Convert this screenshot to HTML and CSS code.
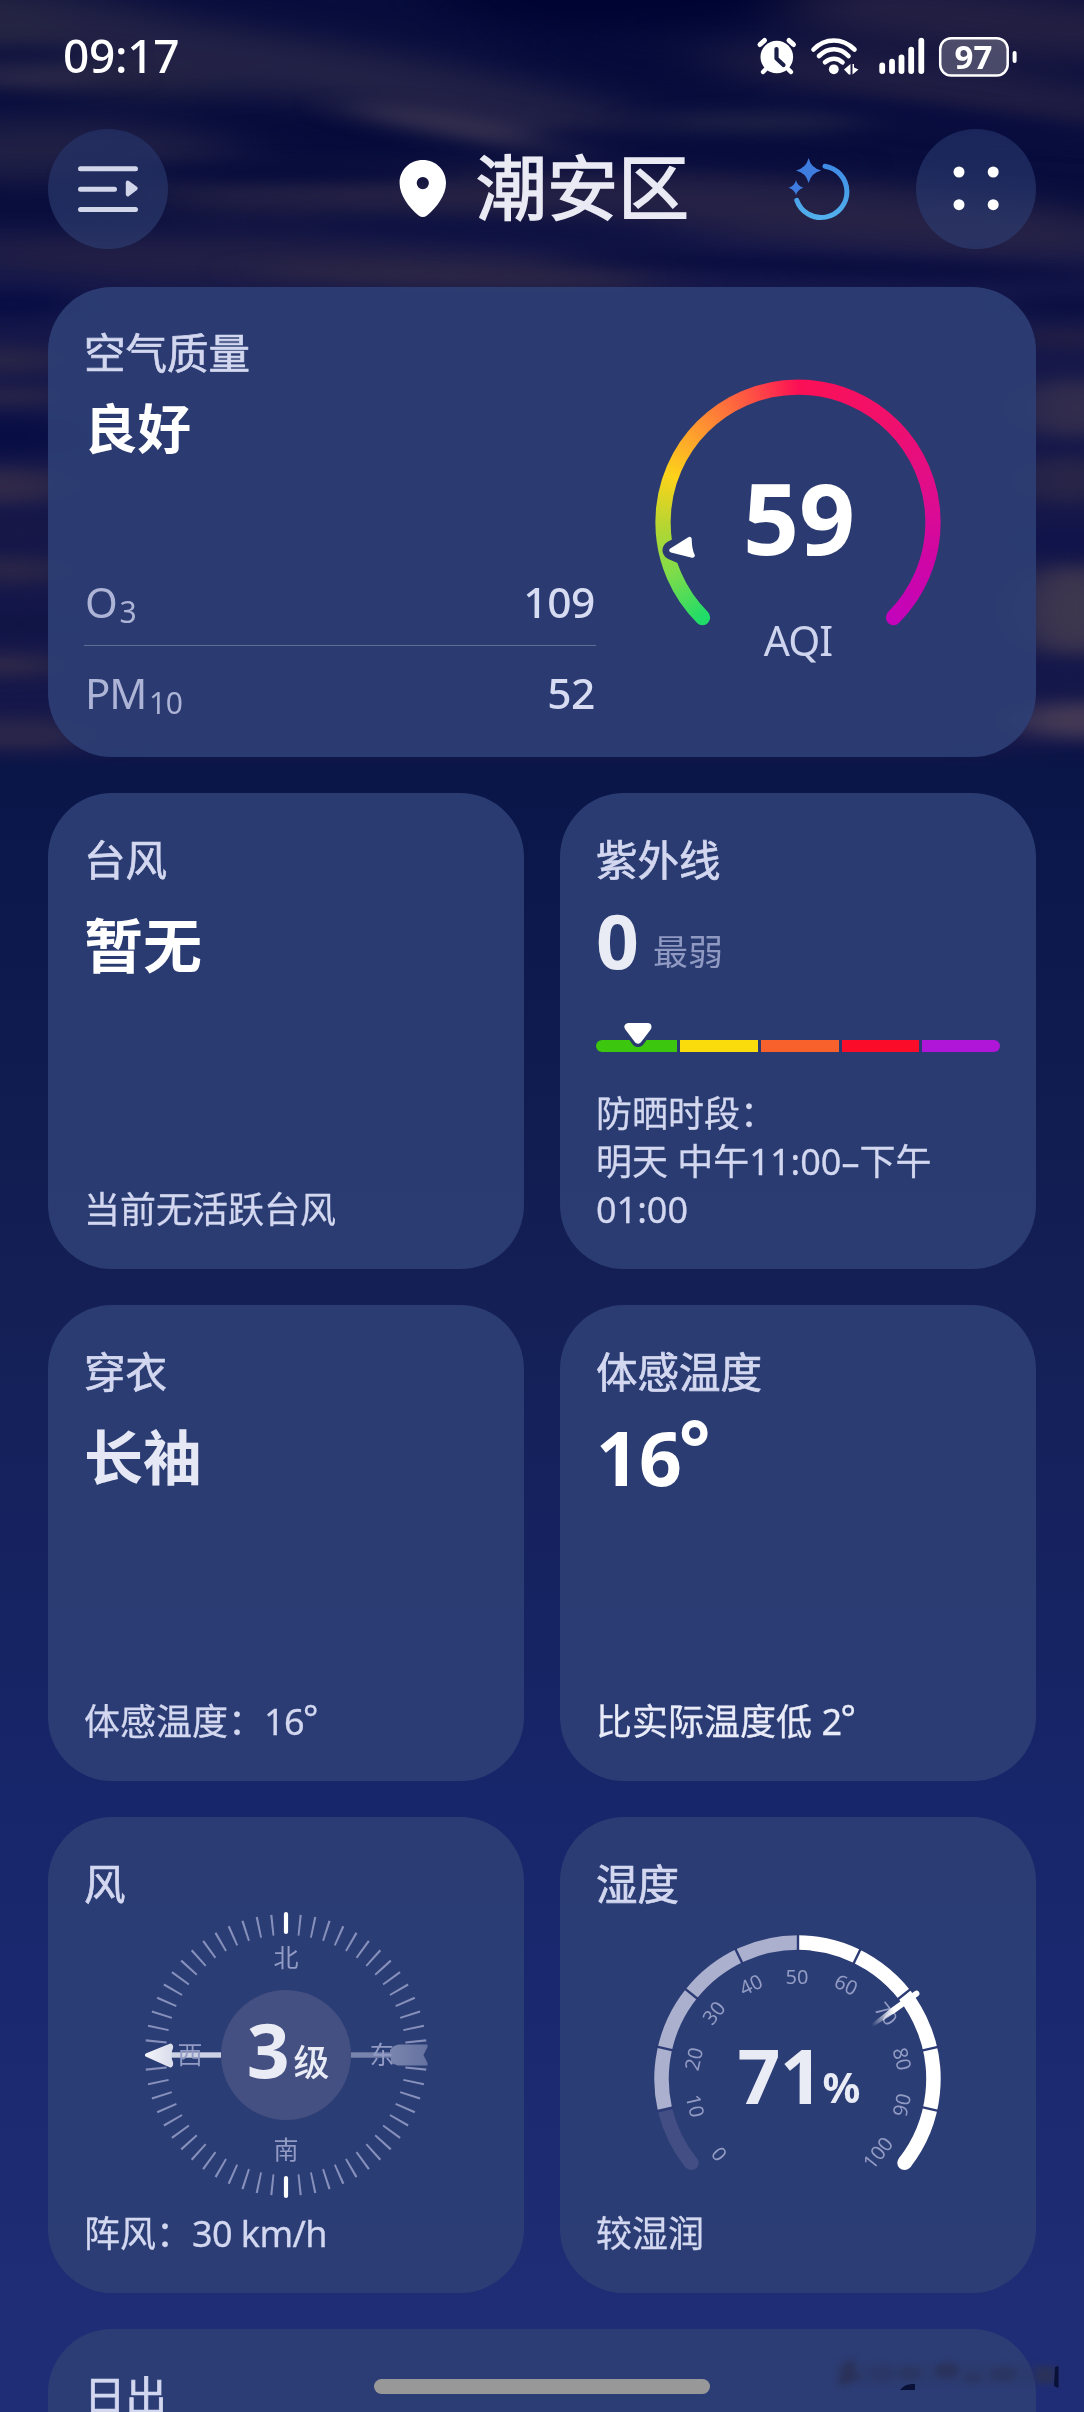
FILE: index.html
```html
<!DOCTYPE html>
<html lang="zh-CN">
<head>
<meta charset="utf-8">
<title>潮安区 天气</title>
<link rel="stylesheet" href="styles.css">
</head>
<body>
<div class="screen">
  <svg class="sky" viewBox="0 0 1084 800" aria-hidden="true">
    <defs>
      <filter id="soft" x="-20%" y="-200%" width="140%" height="500%" color-interpolation-filters="sRGB"><feGaussianBlur stdDeviation="26 8"/></filter>
      <filter id="wide" x="-20%" y="-100%" width="140%" height="300%" color-interpolation-filters="sRGB"><feGaussianBlur stdDeviation="40 14"/></filter>
      <linearGradient id="skyfade" x1="0" y1="0" x2="0" y2="1">
        <stop offset="0" stop-color="#fff"/><stop offset=".93" stop-color="#fff"/><stop offset=".965" stop-color="#000"/>
      </linearGradient>
      <mask id="skymask"><rect width="1084" height="800" fill="url(#skyfade)"/></mask>
    </defs>
    <g mask="url(#skymask)">
      <rect width="1084" height="800" fill="#080d3d"/>
      <g filter="url(#wide)">
        <rect x="-100" y="230" width="1300" height="560" fill="#15174a"/>
        <ellipse cx="60" cy="40" rx="230" ry="46" fill="#252542" transform="rotate(8 60 40)"/>
        <ellipse cx="340" cy="75" rx="320" ry="32" fill="#222146" transform="rotate(10 340 75)"/>
        <ellipse cx="40" cy="150" rx="200" ry="32" fill="#1f1f45"/>
        <ellipse cx="980" cy="20" rx="260" ry="32" fill="#231f42" transform="rotate(6 980 20)"/>
        <ellipse cx="960" cy="90" rx="260" ry="26" fill="#211e43" transform="rotate(8 960 90)"/>
        <ellipse cx="480" cy="195" rx="350" ry="22" fill="#272345"/>
        <ellipse cx="850" cy="215" rx="320" ry="32" fill="#262246" transform="rotate(5 850 215)"/>
        <ellipse cx="300" cy="262" rx="380" ry="22" fill="#232045" transform="rotate(2 300 262)"/>
        <ellipse cx="620" cy="-5" rx="190" ry="34" fill="#000433"/>
        <ellipse cx="620" cy="60" rx="120" ry="20" fill="#050a3a" transform="rotate(12 620 60)"/>
        <ellipse cx="330" cy="128" rx="180" ry="18" fill="#050a3a" transform="rotate(4 330 128)"/>
      </g>
      <g filter="url(#soft)">
        <ellipse cx="475" cy="128" rx="130" ry="12" fill="#35304f" transform="rotate(10 475 128)"/>
        <ellipse cx="760" cy="122" rx="110" ry="10" fill="#1e2145"/>
        <ellipse cx="30" cy="78" rx="80" ry="8" fill="#2c294a"/>
        <ellipse cx="20" cy="54" rx="80" ry="8" fill="#0c1040"/>
        <ellipse cx="280" cy="172" rx="180" ry="9" fill="#060b3b"/>
        <ellipse cx="680" cy="150" rx="160" ry="10" fill="#080c3d" transform="rotate(5 680 150)"/>
        <ellipse cx="960" cy="122" rx="170" ry="12" fill="#080c3e" transform="rotate(7 960 122)"/>
        <ellipse cx="500" cy="232" rx="200" ry="9" fill="#0d1142" transform="rotate(3 500 232)"/>
        <ellipse cx="830" cy="266" rx="280" ry="9" fill="#080c3d" transform="rotate(2 830 266)"/>
        <ellipse cx="450" cy="276" rx="200" ry="8" fill="#2e2846" transform="rotate(2 450 276)"/>
        <ellipse cx="10" cy="304" rx="70" ry="16" fill="#080e43"/>
        <ellipse cx="5" cy="360" rx="70" ry="14" fill="#282447"/>
        <ellipse cx="10" cy="396" rx="70" ry="8" fill="#2c2748"/>
        <ellipse cx="10" cy="436" rx="70" ry="20" fill="#080e43"/>
        <ellipse cx="5" cy="486" rx="70" ry="18" fill="#302949"/>
        <ellipse cx="10" cy="530" rx="70" ry="8" fill="#171845"/>
        <ellipse cx="10" cy="570" rx="70" ry="14" fill="#292547"/>
        <ellipse cx="10" cy="624" rx="70" ry="12" fill="#101444"/>
        <ellipse cx="0" cy="665" rx="70" ry="12" fill="#2e2849"/>
        <ellipse cx="20" cy="735" rx="80" ry="18" fill="#2a264a"/>
        <ellipse cx="1070" cy="306" rx="70" ry="12" fill="#0b0f40"/>
        <ellipse cx="1070" cy="338" rx="70" ry="10" fill="#221e44"/>
        <ellipse cx="1075" cy="408" rx="60" ry="30" fill="#322d4d"/>
        <ellipse cx="1070" cy="365" rx="60" ry="7" fill="#17194a"/>
        <ellipse cx="1070" cy="480" rx="60" ry="24" fill="#282548"/>
        <ellipse cx="1070" cy="540" rx="60" ry="12" fill="#10134a"/>
        <ellipse cx="1075" cy="610" rx="60" ry="46" fill="#3e374f"/>
        <ellipse cx="1075" cy="676" rx="60" ry="10" fill="#14184a"/>
        <ellipse cx="1080" cy="720" rx="70" ry="18" fill="#443a55"/>
        <ellipse cx="1070" cy="762" rx="70" ry="12" fill="#0c1446"/>
      </g>
    </g>
  </svg>

  <div class="status">
    <span class="clock">09:17</span>
    <svg class="status-icons" width="264" height="48" viewBox="755 32 264 48" aria-hidden="true">
      <g stroke="#fff" stroke-linecap="round" fill="none">
        <path d="M760 44.500L764.500 40.500M793.500 44.500L789 40.500" stroke-width="5"/>
        <path d="M766 69L763 72M788 69L791 72" stroke-width="4.500"/>
        <circle cx="776.800" cy="57" r="16.300" fill="#fff" stroke="none"/>
        <path d="M776.500 49V58.500L783.500 65" stroke="#1a1d46" stroke-width="4.200" stroke-linejoin="round"/>
        <path d="M813.500 49.500C825 37.500 842.500 37.500 854.500 49.500M819 56C828 47 840 47 848.500 56M825 62.300C830.500 57.500 837.500 57.500 842.500 62.300" stroke-width="4.600"/>
        <circle cx="833.800" cy="69.300" r="4.900" fill="#fff" stroke="none"/>
        <path d="M850.500 64V74.500H848.800L844 69.500Z M852.500 74.500V64H854V67.500L858.500 69.500Z" fill="#fff" stroke="none"/>
        <path d="M882.200 65.500V71M892 61.700V71M901.500 57.400V71M911.200 49.700V71M921.300 40.600V71" stroke-width="5.800"/>
        <rect x="940.200" y="38.200" width="67.500" height="37.300" rx="11" stroke-width="2.500" fill="rgba(255,255,255,.22)"/>
        <path d="M1014.600 53V61" stroke-width="4"/>
      </g>
      <text class="battery" x="973.500" y="69.300">97</text>
    </svg>
  </div>

  <header class="header">
    <button class="round" aria-label="menu">
      <svg width="64" height="50" viewBox="76 164 64 50">
        <path d="M80.500 168.800H135.500M80.500 189.200H114.500M80.500 209.400H135.500" stroke="#d2d6ea" stroke-width="5" stroke-linecap="round"/>
        <path d="M127.800 182.500L135.700 188.300L127.800 194.300Z" fill="#d2d6ea" stroke="#d2d6ea" stroke-width="4" stroke-linejoin="round"/>
      </svg>
    </button>
    <svg class="pin" width="48" height="60" viewBox="399 160 48 60">
      <path fill="#fff" fill-rule="evenodd" d="M422.800 161C436 161 446 171 446 184C446 196 437 208 427 216.500Q422.800 219.500 418.600 216.500C408.500 208 399.600 196 399.600 184C399.600 171 409.600 161 422.800 161ZM422.800 178A6.100 6.100 0 1 0 422.800 190.200A6.100 6.100 0 1 0 422.800 178Z"/>
    </svg>
    <h1 class="city">潮安区</h1>
    <svg class="refresh" width="62" height="66" viewBox="788 155 62 66">
      <defs><linearGradient id="ring" x1="0" y1="0" x2="0" y2="1"><stop offset="0" stop-color="#3f8ce6"/><stop offset="1" stop-color="#52b0ec"/></linearGradient></defs>
      <path d="M825 165.200A25.800 25.800 0 1 1 796.800 199.300" fill="none" stroke="url(#ring)" stroke-width="5" stroke-linecap="round"/>
      <path d="M808.600 157Q811 167 821.200 169.400Q811 171.800 808.600 182Q806.200 171.800 796 169.400Q806.200 167 808.600 157ZM796 179.300Q797.700 185.300 803.500 186.800Q797.700 188.300 796 194.300Q794.300 188.300 788.500 186.800Q794.300 185.300 796 179.300Z" fill="#3f7ce0"/>
    </svg>
    <button class="round" aria-label="more">
      <svg width="48" height="46" viewBox="952 166 48 46"><g fill="#fff"><circle cx="959" cy="172" r="5.500"/><circle cx="993.200" cy="172" r="5.500"/><circle cx="959" cy="204.700" r="5.500"/><circle cx="993.200" cy="204.700" r="5.500"/></g></svg>
    </button>
  </header>

  <main class="cards">
    <section class="card air">
      <div class="air-info">
        <h2 class="title">空气质量</h2>
        <p class="value">良好</p>
        <dl class="pollutants">
          <div class="pollutant"><dt>O<sub>3</sub></dt><dd>109</dd></div>
          <div class="pollutant"><dt>PM<sub>10</sub></dt><dd>52</dd></div>
        </dl>
      </div>
      <svg class="aqi" width="320" height="320" viewBox="-160 -160 320 320">
        <mask id="aqimask" maskUnits="userSpaceOnUse" x="-150" y="-150" width="300" height="300">
          <path d="M-95.500 95.500A135 135 0 1 1 95.500 95.500" fill="none" stroke="#fff" stroke-width="15.300" stroke-linecap="round"/>
          <path d="M-126 28.300L-108 19V36Z" fill="#000" stroke="#000" stroke-width="19" stroke-linejoin="round"/>
        </mask>
        <g mask="url(#aqimask)"><foreignObject x="-150" y="-150" width="300" height="300"><div class="rainbow"></div></foreignObject></g>
        <path d="M-126.500 28.300L-108.500 17.200Q-108.500 27 -105.500 33.500Z" fill="#fff" stroke="#fff" stroke-width="4.500" stroke-linejoin="round"/>
        <text class="aqi-value" x="1" y="33">59</text>
        <text class="aqi-label" x="0" y="134">AQI</text>
      </svg>
    </section>

    <section class="card">
      <h2 class="title">台风</h2>
      <p class="value">暂无</p>
      <p class="note">当前无活跃台风</p>
    </section>

    <section class="card">
      <h2 class="title">紫外线</h2>
      <p class="value uv-value"><b class="number">0</b><span class="level">最弱</span></p>
      <div class="uv-bar">
        <i class="seg seg-1"></i><i class="seg seg-2"></i><i class="seg seg-3"></i><i class="seg seg-4"></i><i class="seg seg-5"></i>
        <svg class="uv-marker" width="44" height="34" viewBox="0 0 44 34"><path d="M12.500 7.500H31.500L22 21Z" fill="#2b3a6e" stroke="#2b3a6e" stroke-width="14" stroke-linejoin="round" clip-path="inset(20px 0 0 0)"/><path d="M12.500 8H31.500L22 20.500Z" fill="#fff" stroke="#fff" stroke-width="8" stroke-linejoin="round"/></svg>
      </div>
      <p class="note">防晒时段：<br>明天 中午11:00–下午<br>01:00</p>
    </section>

    <section class="card">
      <h2 class="title">穿衣</h2>
      <p class="value dim">长袖</p>
      <p class="note">体感温度：<span class="reading">16<span class="small-degree">°</span></span></p>
    </section>

    <section class="card">
      <h2 class="title">体感温度</h2>
      <p class="value"><b class="number">16<span class="degree">°</span></b></p>
      <p class="note bright">比实际温度低 <span class="reading">2<span class="small-degree">°</span></span></p>
    </section>

    <section class="card">
      <h2 class="title">风</h2>
      <svg class="dial" width="404" height="300" viewBox="-202 -146 404 300">
        <defs>
          <linearGradient id="head" gradientUnits="userSpaceOnUse" x1="-141" x2="-113"><stop offset="0" stop-color="#f4f5fb"/><stop offset="1" stop-color="#d9dcea"/></linearGradient>
          <linearGradient id="tail" gradientUnits="userSpaceOnUse" x1="104" x2="142"><stop offset="0" stop-color="#7a85ae"/><stop offset="1" stop-color="#65719f"/></linearGradient>
        </defs>
        <circle r="130.500" fill="none" stroke="#8690bb" stroke-width="21" pathLength="360" stroke-dasharray="0 5.550 .9 5.100 .9 5.100 .9 5.100 .9 5.100 .9 5.100 .9 5.100 .9 5.100 .9 5.100 .9 5.100 .9 5.100 .9 5.100 .9 5.100 .9 5.100 .9 5.550"/>
        <path d="M0 -141V-123M0 123V141" stroke="#fff" stroke-width="4.200" stroke-linecap="round"/>
        <rect x="-116" y="-2.700" width="51" height="5.400" fill="#cdd1e4"/>
        <path d="M-139 0L-115.500 -9.500Q-114.500 -9 -115 -7Q-118 0 -115 7.500Q-114.500 10 -115.500 10.500Z" fill="url(#head)" stroke="url(#head)" stroke-width="4" stroke-linejoin="round"/>
        <rect x="65" y="-2.700" width="43" height="5.400" fill="#7984ae"/>
        <path d="M108 -9Q111 -10.500 113 -10.500H141Q142 -10 141.500 -8L137.500 0L141.500 8Q142 10 141 10.500H112Q108 10 105 7L104 -5Z" fill="url(#tail)"/>
        <circle r="65" fill="#445081"/>
        <g class="compass"><text x="0" y="-88">北</text><text x="0" y="104">南</text><text x="-96" y="9">西</text><text x="96" y="9">东</text></g>
        <text class="gauge-value" x="-18" y="22.500">3</text>
        <text class="gauge-unit" x="25.500" y="21">级</text>
      </svg>
      <p class="note">阵风：<span class="reading">30 km/h</span></p>
    </section>

    <section class="card">
      <h2 class="title">湿度</h2>
      <svg class="dial" width="404" height="300" viewBox="-202 -170 404 300">
        <defs><linearGradient id="needle" gradientUnits="userSpaceOnUse" x1="0" y1="-91" x2="0" y2="-118"><stop offset="0" stop-color="#fff" stop-opacity="0"/><stop offset="1" stop-color="#fff"/></linearGradient></defs>
        <g fill="none" stroke-width="14.500">
          <path d="M-106.700 84.100A136.500 136.500 0 0 1 -132.700 31.700" stroke="#434f84"/>
          <circle cx="-106.500" cy="83.800" r="7.200" fill="#434f84" stroke="none"/>
          <path d="M-133.100 30.200A136.500 136.500 0 0 1 0 -136.500" stroke="#aab0cd"/>
          <path d="M0 -136.500A136.500 136.500 0 0 1 106.500 84" stroke="#fff"/>
          <circle cx="106.500" cy="83.800" r="7.200" fill="#fff" stroke="none"/>
        </g>
        <g stroke="#2c3b75" stroke-width="2.400">
          <path d="M0 -127V-146" transform="rotate(-102.800)"/><path d="M0 -127V-146" transform="rotate(-77.100)"/><path d="M0 -127V-146" transform="rotate(-51.400)"/><path d="M0 -127V-146" transform="rotate(-25.700)"/><path d="M0 -127V-146"/><path d="M0 -127V-146" transform="rotate(25.700)"/><path d="M0 -127V-146" transform="rotate(51.400)"/><path d="M0 -127V-146" transform="rotate(77.100)"/><path d="M0 -127V-146" transform="rotate(102.800)"/>
        </g>
        <g class="scale">
          <text transform="translate(-79 75) rotate(51.400)" y="7">0</text>
          <text transform="translate(-103 27) rotate(77.100)" y="7">10</text>
          <text transform="translate(-104 -20) rotate(-77.100)" y="7">20</text>
          <text transform="translate(-84 -66) rotate(-51.400)" y="7">30</text>
          <text transform="translate(-47 -94) rotate(-25.700)" y="7">40</text>
          <text transform="translate(-1 -102)" y="7">50</text>
          <text transform="translate(48 -94) rotate(25.700)" y="7">60</text>
          <text transform="translate(88 -65) rotate(51.400)" y="7">70</text>
          <text transform="translate(104 -20) rotate(77.100)" y="7">80</text>
          <text transform="translate(104 26) rotate(-77.100)" y="7">90</text>
          <text transform="translate(80 74) rotate(-51.400)" y="7">100</text>
        </g>
        <g transform="rotate(54.200)">
          <path d="M-1.500 -91L-3 -118V-146A3 3 0 0 1 3 -146V-118L1.500 -91Z" fill="url(#needle)"/>
        </g>
        <text class="gauge-value" x="-18" y="24.500">71</text>
        <text class="gauge-percent" x="43.500" y="24">%</text>
      </svg>
      <p class="note">较湿润</p>
    </section>

    <section class="card sun">
      <h2 class="title">日出</h2>
    </section>
  </main>

  <svg class="smudge" width="236" height="44" viewBox="826 2352 236 44" aria-hidden="true">
    <filter id="smear" x="-20%" y="-50%" width="140%" height="200%" color-interpolation-filters="sRGB"><feGaussianBlur stdDeviation="3"/></filter>
    <g filter="url(#smear)" fill="#2a325a">
      <rect x="836" y="2364" width="206" height="20" opacity=".25"/>
      <path d="M838 2384L842 2364L854 2358L856 2374L864 2376L845 2386Z"/>
      <ellipse cx="882" cy="2373" rx="13" ry="9" opacity=".35"/>
      <ellipse cx="910" cy="2373" rx="12" ry="7" opacity=".6"/>
      <ellipse cx="947" cy="2370" rx="12" ry="8" opacity=".9"/>
      <ellipse cx="973" cy="2378" rx="10" ry="6" opacity=".5"/>
      <ellipse cx="1003" cy="2374" rx="14" ry="8" opacity=".6"/>
      <rect x="1036" y="2366" width="20" height="18"/>
    </g>
    <path d="M900 2390Q905 2383 915 2384V2390ZM1055 2367L1058.500 2366V2388L1054 2386Z" fill="#0a1136"/>
  </svg>
  <div class="home-bar"></div>
</div>
</body>
</html>
```
FILE: styles.css
```css
* {
  box-sizing: border-box;
}

body {
  margin: 0;
  background: #1f2d75;
  color: #d3d8f0;
  font-family: "Noto Sans", "Noto Sans CJK SC", sans-serif;
}

h1, h2, p, dl, dd {
  margin: 0;
}

.screen {
  position: relative;
  width: 1084px;
  height: 2412px;
  overflow: hidden;
  background: linear-gradient(#08113f 0, #0a1648 780px, #141f55 1290px, #17266a 1795px, #1f2d76 2320px, #1f2d76 2412px);
}

.sky {
  position: absolute;
  top: 0;
  left: 0;
  width: 1084px;
  height: 800px;
}

.status {
  position: relative;
  display: flex;
  justify-content: space-between;
  height: 129px;
  padding: 32px 65px 0 63px;
}

.clock {
  height: 46px;
  font-size: 46px;
  font-weight: 500;
  line-height: 46px;
  letter-spacing: -.3px;
  color: #fff;
}

.battery {
  font-size: 33px;
  font-weight: 700;
  text-anchor: middle;
  fill: #fff;
}

.header {
  position: relative;
  display: flex;
  align-items: center;
  height: 120px;
  margin: 0 48px 38px;
}

.round {
  display: flex;
  align-items: center;
  justify-content: center;
  width: 120px;
  height: 120px;
  padding: 0;
  border: 0;
  border-radius: 50%;
  background: linear-gradient(rgba(38, 54, 110, .6), rgba(44, 58, 108, .75));
}

.pin {
  margin-left: 231px;
}

.city {
  margin-top: -5px;
  margin-left: 29px;
  font-size: 71px;
  font-weight: 400;
  line-height: 100px;
  color: #e9eaf3;
  -webkit-text-stroke: 1.5px #e9eaf3;
}

.refresh {
  margin-right: 66px;
  margin-left: auto;
}

.cards {
  position: relative;
  display: grid;
  grid-template-columns: 476px 476px;
  grid-template-rows: 470px;
  grid-auto-rows: 476px;
  gap: 36px;
  margin: 0 48px;
}

.card {
  display: flex;
  flex-direction: column;
  padding: 44px 36px 35px;
  border-radius: 64px;
  background: rgba(46, 63, 118, .9);
}

.air {
  flex-direction: row;
  align-items: center;
  grid-column: 1 / -1;
  padding: 0 36px;
}

.air-info {
  width: 512px;
  height: 470px;
  padding-top: 43px;
}

.sun {
  grid-column: 1 / -1;
}

.title {
  height: 48px;
  font-size: 41.500px;
  font-weight: 400;
  line-height: 47px;
  -webkit-text-stroke: .7px currentColor;
}

.value {
  height: 72px;
  margin-top: 24px;
  font-size: 59px;
  font-weight: 700;
  line-height: 72px;
  color: #fff;
}

.air .value {
  margin-top: 15px;
  font-size: 53.500px;
}

.dim {
  color: #e6e9f5;
}

.number {
  font-size: 75px;
  font-weight: 700;
}

.degree {
  position: relative;
  top: -11px;
  margin-left: -3px;
}

.note {
  margin-top: auto;
  font-size: 36px;
  line-height: 48px;
  -webkit-text-stroke: .3px currentColor;
}

.reading {
  letter-spacing: -.6px;
}

.small-degree {
  position: relative;
  top: -4px;
  margin-left: -1px;
}

.bright {
  color: #e9ecf8;
}

.pollutants {
  margin-top: 93px;
}

.pollutant {
  display: flex;
  justify-content: space-between;
  height: 87px;
  padding: 14px 1px 0;
  font-size: 42.500px;
  line-height: 60px;
}

.pollutant + .pollutant {
  padding-top: 17px;
  border-top: 1px solid rgba(255, 255, 255, .26);
}

.pollutant dt {
  font-size: 42px;
  letter-spacing: -1.200px;
  color: #adb4d6;
}

.pollutant dd {
  font-weight: 500;
  letter-spacing: -.4px;
  color: #d8dcf2;
}

.pollutant sub {
  margin-left: 3px;
  font-size: 30px;
  letter-spacing: -.5px;
  line-height: 0;
  vertical-align: -5px;
}

.aqi {
  margin-left: 42px;
}

.rainbow {
  width: 300px;
  height: 300px;
  background: conic-gradient(from 180deg, #20dc68 45deg, #7fdc4a 68deg, #b5d632 88deg, #fdd31a 110deg, #fe8d34 137deg, #fe5044 160deg, #fb1055 180deg, #f0106c 222deg, #dd0c90 262deg, #cf06a4 285deg, #c404ba 315deg);
}

.aqi-value {
  font-size: 98px;
  font-weight: 700;
  text-anchor: middle;
  fill: #fff;
}

.aqi-label {
  font-size: 41px;
  letter-spacing: -1px;
  text-anchor: middle;
  fill: #cfd4ee;
}

.uv-value {
  display: flex;
  align-items: baseline;
  margin-top: 19px;
  color: #e9ebf5;
}

.level {
  margin-left: 14px;
  font-size: 35px;
  font-weight: 400;
  color: #9099c2;
  transform: translateY(-4px);
}

.uv-bar {
  position: relative;
  display: grid;
  grid-template-columns: 81px repeat(4, 1fr);
  gap: 3px;
  height: 12px;
  margin-top: 64px;
}

.seg-1 {
  border-radius: 6px 0 0 6px;
  background: #3cc60e;
}

.seg-2 {
  background: #fadb0c;
}

.seg-3 {
  background: #f9612c;
}

.seg-4 {
  background: #fb0d2a;
}

.seg-5 {
  border-radius: 0 6px 6px 0;
  background: #b016d8;
}

.uv-marker {
  position: absolute;
  top: -21px;
  left: 20px;
}

.dial {
  display: block;
  flex: none;
}

.compass {
  font-size: 25px;
  text-anchor: middle;
  fill: #929bc3;
}

.gauge-value {
  font-size: 75px;
  font-weight: 700;
  letter-spacing: -.5px;
  text-anchor: middle;
  fill: #e9ebf5;
}

.gauge-unit {
  font-size: 36px;
  font-weight: 500;
  text-anchor: middle;
  fill: #e9ebf5;
}

.gauge-percent {
  font-size: 42px;
  font-weight: 700;
  text-anchor: middle;
  fill: #e9ebf5;
}

.scale {
  font-size: 20px;
  text-anchor: middle;
  fill: #929bc3;
}

.smudge {
  position: absolute;
  top: 2352px;
  left: 826px;
}

.home-bar {
  position: absolute;
  bottom: 18px;
  left: 374px;
  width: 336px;
  height: 15px;
  border-radius: 8px;
  background: #989898;
}
```
